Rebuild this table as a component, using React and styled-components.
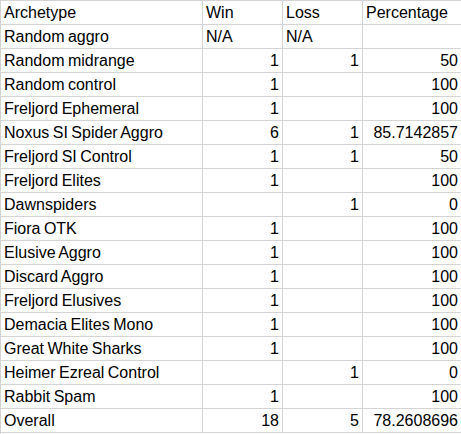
import React from "react";
import styled, { createGlobalStyle } from "styled-components";

const GlobalStyle = createGlobalStyle`
  body {
    margin: 0;
    background: #ffffff;
  }
`;

const Sheet = styled.div`
  display: grid;
  grid-template-columns: 202px 80px 80px 98px;
  grid-auto-rows: 24px;
  width: 461px;
  height: 434px;
  box-sizing: border-box;
  border-top: 1px solid #d4d4d4;
  border-left: 1px solid #d4d4d4;
  background: #fff;
  font-family: "Liberation Sans", Arial, sans-serif;
  font-size: 16px;
  word-spacing: -1px;
  color: #000;
`;

const Cell = styled.div`
  box-sizing: border-box;
  border-bottom: 1px solid #d4d4d4;
  border-right: ${(p) => (p.last ? "none" : "1px solid #d4d4d4")};
  display: flex;
  align-items: center;
  justify-content: ${(p) => (p.num ? "flex-end" : "flex-start")};
  padding: 1px ${(p) => (p.num ? "3px" : "0")} 0 ${(p) => (p.num ? "0" : "3px")};
  white-space: nowrap;
  overflow: hidden;
`;

const rows = [
  ["Archetype", "Win", "Loss", "Percentage"],
  ["Random aggro", "N/A", "N/A", ""],
  ["Random midrange", 1, 1, 50],
  ["Random control", 1, "", 100],
  ["Freljord Ephemeral", 1, "", 100],
  ["Noxus SI Spider Aggro", 6, 1, 85.7142857],
  ["Freljord SI Control", 1, 1, 50],
  ["Freljord Elites", 1, "", 100],
  ["Dawnspiders", "", 1, 0],
  ["Fiora OTK", 1, "", 100],
  ["Elusive Aggro", 1, "", 100],
  ["Discard Aggro", 1, "", 100],
  ["Freljord Elusives", 1, "", 100],
  ["Demacia Elites Mono", 1, "", 100],
  ["Great White Sharks", 1, "", 100],
  ["Heimer Ezreal Control", "", 1, 0],
  ["Rabbit Spam", 1, "", 100],
  ["Overall", 18, 5, 78.2608696],
];

export default function App() {
  return (
    <>
      <GlobalStyle />
      <Sheet>
        {rows.map((row, r) =>
          row.map((value, c) => (
            <Cell
              key={r + "-" + c}
              num={typeof value === "number"}
              last={c === 3}
            >
              {value}
            </Cell>
          ))
        )}
      </Sheet>
    </>
  );
}
